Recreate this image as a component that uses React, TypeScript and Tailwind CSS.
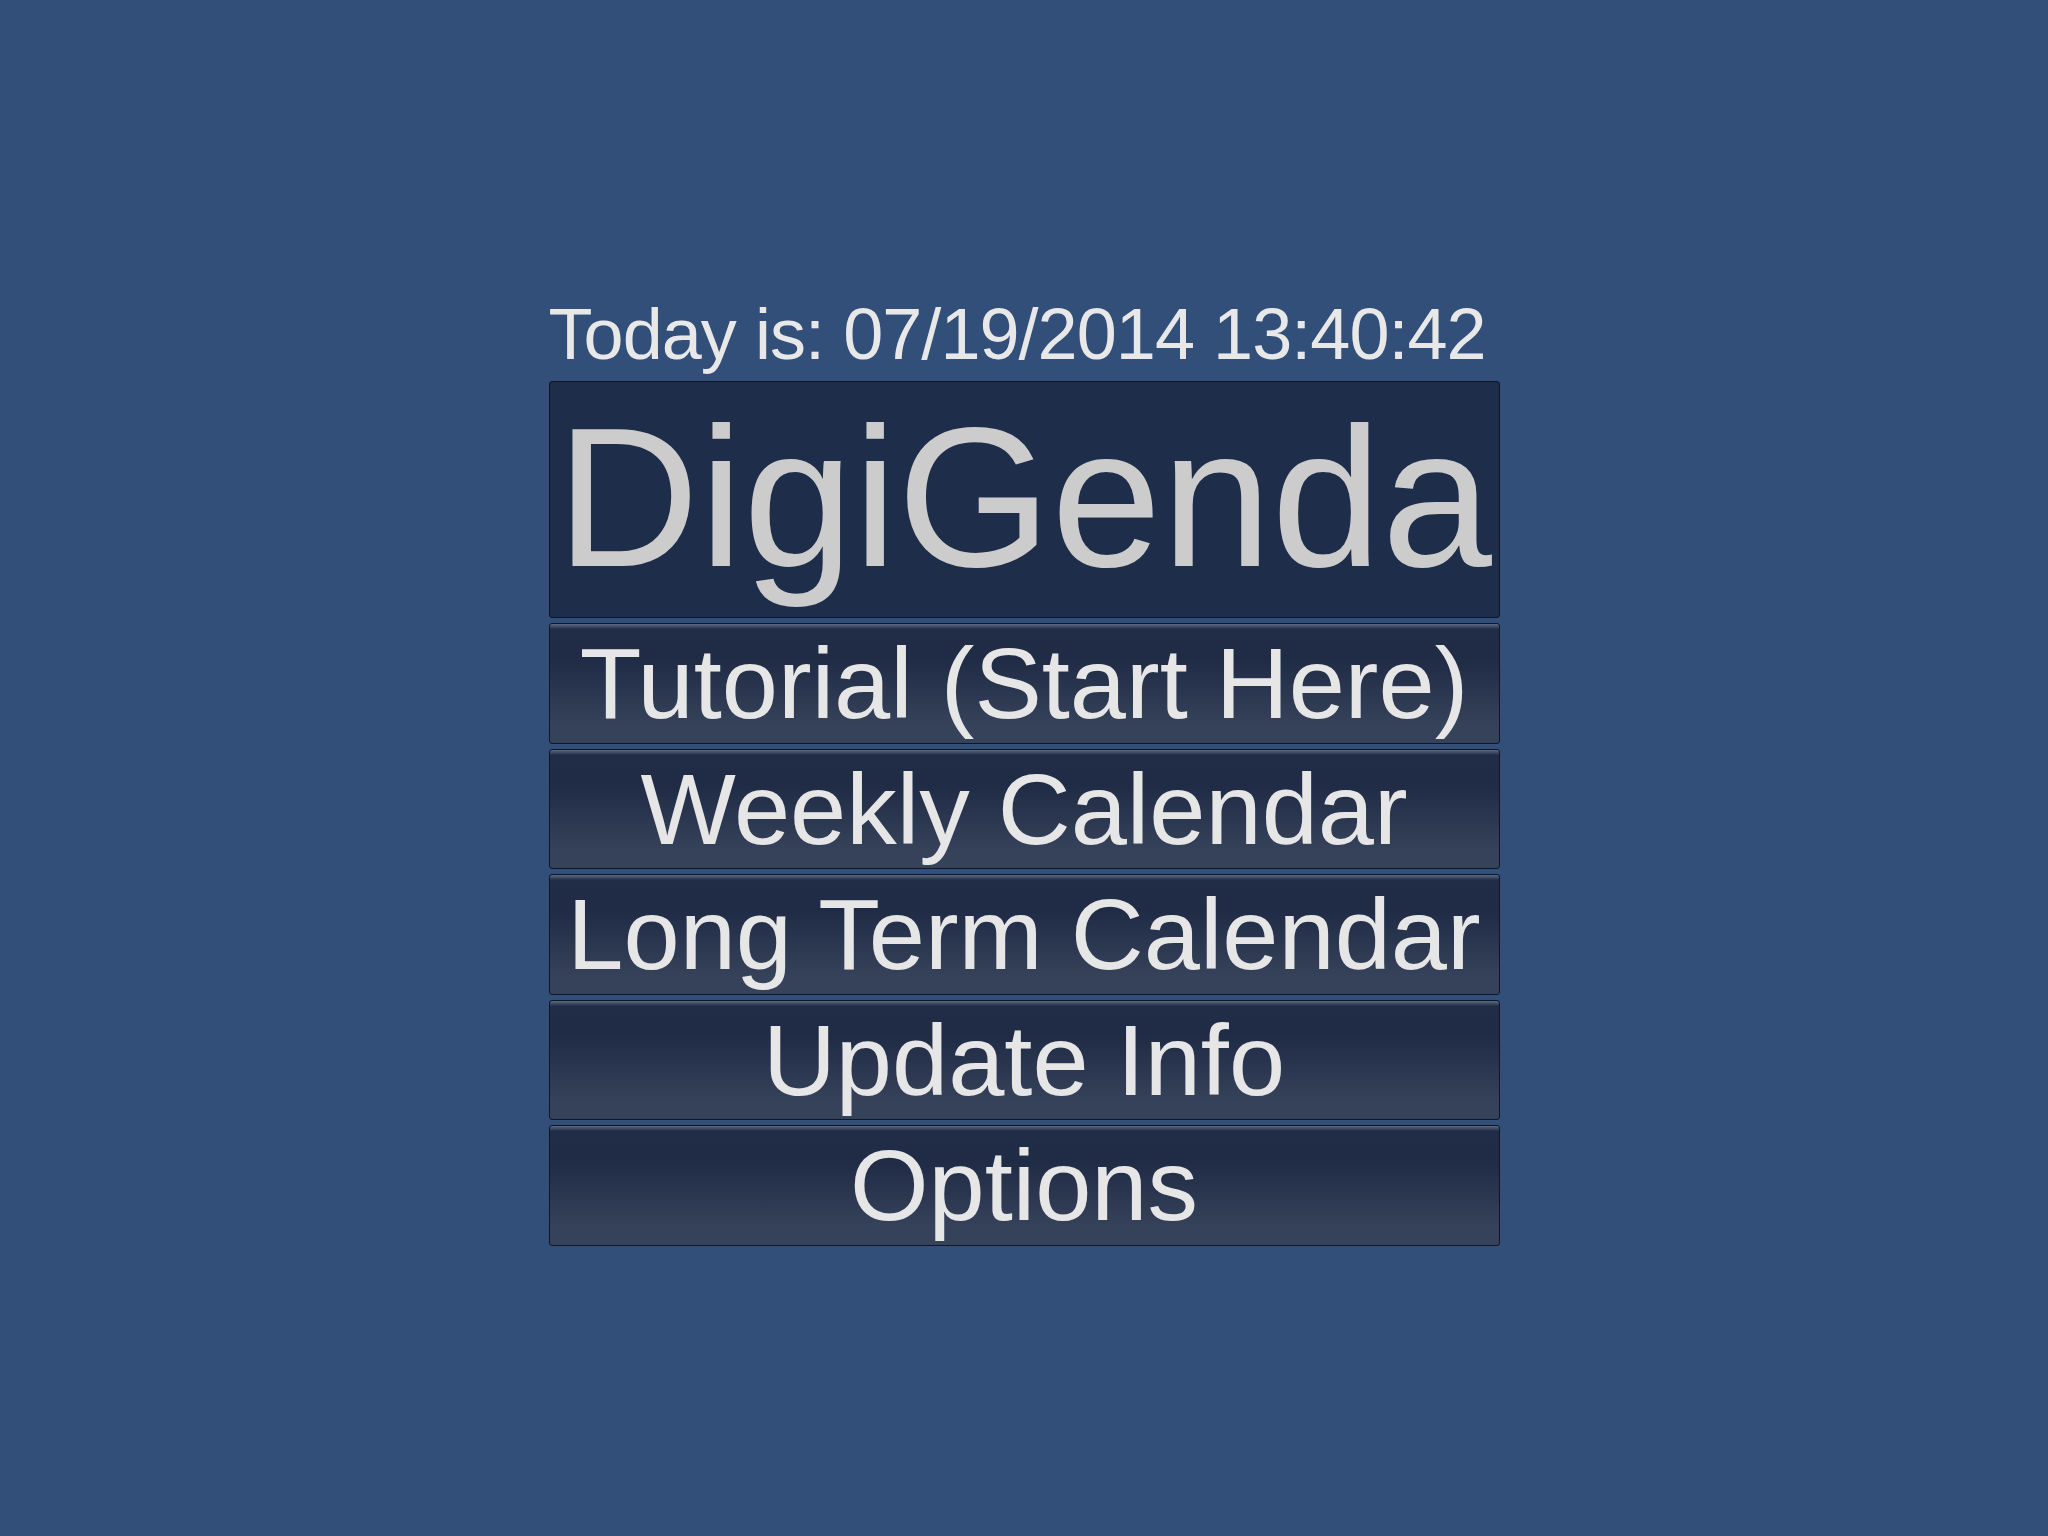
import React from "react";

const buttons = [
  "Tutorial (Start Here)",
  "Weekly Calendar",
  "Long Term Calendar",
  "Update Info",
  "Options",
];

export default function App() {
  return (
    <div
      className="w-[2048px] h-[1536px] bg-[#324f7a] flex justify-center overflow-hidden"
      style={{ fontFamily: '"Liberation Sans", Arial, sans-serif' }}
    >
      <div className="w-[951px] pt-[298px] flex flex-col">
        <div className="text-[72px] leading-[72px] tracking-[-0.95px] text-[#e8e8e8] whitespace-nowrap">
          Today is: 07/19/2014 13:40:42
        </div>
        <div className="mt-[11px] h-[237px] bg-[#1e2d4a] border border-[#0d1424] rounded-[3px] pt-[16px] text-center text-[198px] leading-[200px] text-[#cccccc] whitespace-nowrap overflow-hidden">
          DigiGenda
        </div>
        <div className="mt-[5px] flex flex-col gap-[5px]">
          {buttons.map((b) => (
            <div
              key={b}
              className="h-[120.5px] border border-[#0f1626] rounded-[3px] bg-[linear-gradient(to_bottom,#5b6a80_0px,#3a475f_3px,#212c46_5px,#202b45_30%,#36415a_85%,#36415a_100%)] text-center text-[101px] leading-[118px] text-[#e6e6e6] whitespace-nowrap overflow-hidden"
            >
              {b}
            </div>
          ))}
        </div>
      </div>
    </div>
  );
}
